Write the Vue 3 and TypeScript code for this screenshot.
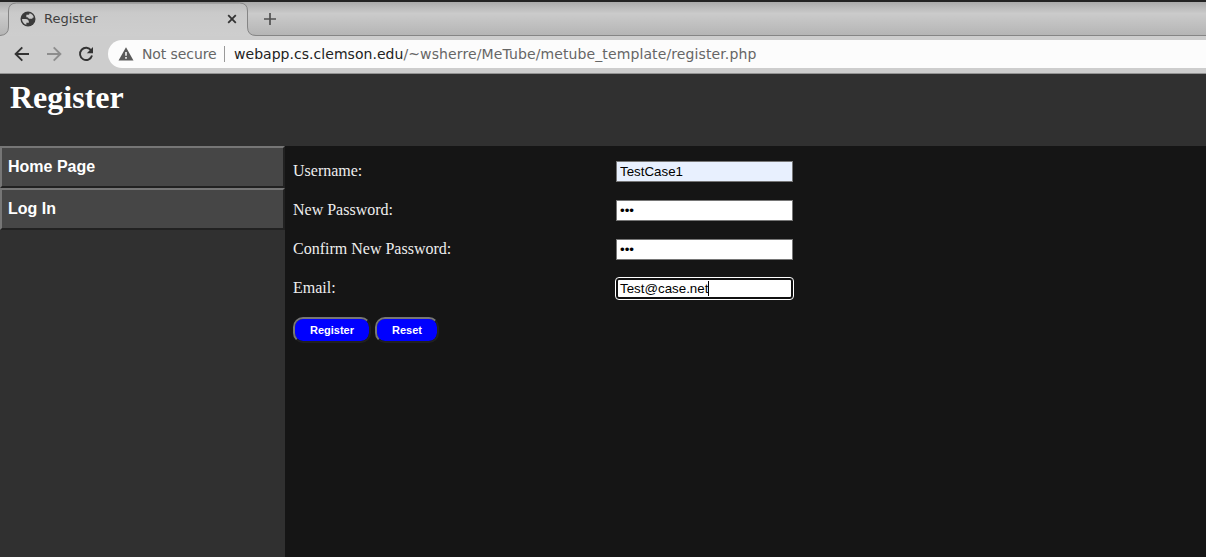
<script setup lang="ts">
import { ref } from 'vue'

interface Field {
  label: string
  type: string
  value: string
  state: string
}

const fields = ref<Field[]>([
  { label: 'Username:', type: 'text', value: 'TestCase1', state: 'autofilled' },
  { label: 'New Password:', type: 'password', value: 'abc', state: '' },
  { label: 'Confirm New Password:', type: 'password', value: 'abc', state: '' },
  { label: 'Email:', type: 'text', value: 'Test@case.net', state: 'focused' },
])
const links: string[] = ['Home Page', 'Log In']
</script>

<template>
  <div class="window">
    <div class="tabstrip">
      <svg class="tab-shape" width="258" height="34" viewBox="0 0 258 34">
        <defs>
          <linearGradient id="tabfill" x1="0" y1="0" x2="0" y2="1">
            <stop offset="0" stop-color="#bcbcbc" />
            <stop offset=".3" stop-color="#cacaca" />
            <stop offset="1" stop-color="#cecece" />
          </linearGradient>
        </defs>
        <path d="M0 33.5Q8.500 33 8.500 25V9Q8.500 1 16.500 1H239.500Q247.500 1 247.500 9V25Q247.500 33.500 256 33.500H258V34H0Z" fill="url(#tabfill)" />
        <path d="M0 33.500Q8.500 33 8.500 25V9Q8.500 1 16.500 1H239.500Q247.500 1 247.500 9V25Q247.500 33.500 256 33.500H258" fill="none" stroke="#858585" />
      </svg>
      <div class="tab">
        <svg class="globe" width="18" height="18" viewBox="0 0 24 24">
          <circle cx="12" cy="12" r="10" fill="#3b3b3b" />
          <path fill="#cacaca" d="M4 12h4.600c3.400 0 4.900 1.700 4.600 5.100H9.800v2.500C6.300 18.700 4 15.600 4 12z" />
          <path fill="#cacaca" d="M14 4.300c-.1 1.500-.8 2.200-2.100 2.100H9.800v3.200c2.300 0 3.100.8 3.300 2.100h3.500c1 0 1.700-.6 1.800-1.700h1.400c-.6-2.700-2.900-5-5.800-5.700z" />
        </svg>
        <span class="tab-title">Register</span>
        <svg class="close" width="10" height="10" viewBox="0 0 10 10"><path d="M1.200 1.200 8.800 8.800M8.800 1.200 1.200 8.800" stroke="#333" stroke-width="1.800" /></svg>
      </div>
      <svg class="plus" width="12" height="12" viewBox="0 0 12 12"><path d="M6 0V12M0 6H12" stroke="#505050" stroke-width="1.700" /></svg>
    </div>
    <div class="toolbar">
      <svg class="nav-icon" width="20" height="20" viewBox="0 0 20 20"><path d="M17 10H4M10.300 3.300 3.600 10l6.700 6.700" fill="none" stroke="#333" stroke-width="1.900" /></svg>
      <svg class="nav-icon" width="20" height="20" viewBox="0 0 20 20"><path d="M3 10H16M9.700 3.300 16.400 10l-6.700 6.700" fill="none" stroke="#8d8d8d" stroke-width="1.900" /></svg>
      <svg class="nav-icon" width="20" height="20" viewBox="0 0 20 20"><path d="M15.200 6.500A6.100 6.100 0 1 0 16 11.500" fill="none" stroke="#333" stroke-width="1.900" /><path d="M17 3v6.200h-6.200Z" fill="#333" /></svg>
      <div class="omnibox">
        <svg class="warning" width="16" height="14" viewBox="0 0 16 14"><path d="M8 .3 15.500 13.500H.5Z" fill="#5a5a5a" /><path d="M8 5v3.800M8 10v1.700" stroke="#fff" stroke-width="1.500" /></svg>
        <span class="security">Not secure</span>
        <span class="divider"></span>
        <span class="url"><span class="host">webapp.cs.clemson.edu</span>/~wsherre/MeTube/metube_template/register.php</span>
      </div>
    </div>
    <header><h1>Register</h1></header>
    <div class="body">
      <nav>
        <a v-for="link in links" :key="link">{{ link }}</a>
      </nav>
      <form @submit.prevent>
        <label v-for="field in fields" :key="field.label" class="row">
          <span class="label">{{ field.label }}</span>
          <span v-if="field.state === 'focused'" class="input focused">{{ field.value }}<i class="caret"></i></span>
          <input v-else v-model="field.value" class="input" :class="field.state" :type="field.type" />
        </label>
        <div class="actions">
          <button type="submit">Register</button>
          <button type="button" class="reset">Reset</button>
        </div>
      </form>
    </div>
  </div>
</template>

<style>
body {
  margin: 0;
  overflow: hidden;
}
</style>

<style scoped>
.window {
  width: 1206px;
  height: 557px;
  display: flex;
  flex-direction: column;
  overflow: hidden;
  background: #303030;
  font-family: "Liberation Serif", serif;
}
.tabstrip {
  position: relative;
  box-sizing: border-box;
  height: 36px;
  flex: none;
  display: flex;
  align-items: center;
  border-top: 2px solid #222;
  border-bottom: 1px solid #858585;
  background: linear-gradient(#aaa, #cbcbcb 35%, #b5b5b5);
  font-family: "DejaVu Sans", sans-serif;
}
.tab-shape {
  position: absolute;
  left: 0;
  top: 0;
}
.tab {
  position: relative;
  box-sizing: border-box;
  width: 248px;
  height: 33px;
  padding: 0 11px 0 19px;
  display: flex;
  align-items: center;
}
.tab-title {
  margin-left: 7px;
  flex: 1;
  font-size: 13px;
  color: #404040;
}
.plus {
  margin-left: 16px;
}
.toolbar {
  box-sizing: border-box;
  height: 38px;
  flex: none;
  display: flex;
  align-items: center;
  padding: 0 0 1px 12px;
  border-bottom: 1px solid #929292;
  background: #cdcdcd;
  font-family: "DejaVu Sans", sans-serif;
}
.nav-icon {
  margin-right: 12px;
}
.omnibox {
  flex: 1;
  height: 28px;
  display: flex;
  align-items: center;
  padding-left: 10px;
  border-radius: 14px 0 0 14px;
  background: #fcfcfc;
  font-size: 14px;
  color: #666;
  white-space: nowrap;
}
.security {
  width: 74px;
  margin-left: 8px;
  letter-spacing: -0.1px;
}
.divider {
  width: 1px;
  height: 16px;
  margin: 0 9px 0 8px;
  background: #999;
}
.url {
  letter-spacing: 0.11px;
}
.host {
  letter-spacing: 0.04px;
  color: #222;
}
header {
  height: 72px;
  flex: none;
  padding-left: 10px;
  background: #303030;
}
h1 {
  margin: 0;
  padding-top: 5px;
  font-size: 32px;
  line-height: 37px;
  color: #fff;
}
.body {
  flex: 1;
  display: flex;
}
nav {
  width: 285px;
  background: #303030;
}
nav a {
  box-sizing: border-box;
  display: block;
  height: 42px;
  padding-left: 6px;
  border: 2px solid;
  border-color: #767676 #212121 #212121 #767676;
  background: #464646;
  font: bold 16px/37px "Liberation Sans", sans-serif;
  color: #fff;
}
form {
  flex: 1;
  padding: 15px 8px 0;
  background: #151515;
}
.row {
  display: grid;
  grid-template-columns: 323px 177px;
  height: 39px;
  align-items: start;
  font-size: 16px;
  color: #eee;
}
.label {
  line-height: 20px;
}
.input {
  box-sizing: border-box;
  width: 177px;
  height: 21px;
  margin: 0;
  padding: 1px 3px;
  border: 1px solid #767676;
  border-radius: 0;
  background: #fff;
  font: 13.333px/17px "Liberation Sans", sans-serif;
  color: #000;
}
.autofilled {
  background: #e8f0fe;
}
.focused {
  padding: 0 2px;
  border: 2px solid #101010;
  border-radius: 3px;
  outline: 1px solid #fff;
}
.caret {
  display: inline-block;
  width: 1px;
  height: 15px;
  vertical-align: -3px;
  background: #000;
}
.actions {
  display: flex;
  gap: 4px;
}
button {
  box-sizing: border-box;
  width: 78px;
  height: 26px;
  padding: 0;
  border: 2px solid;
  border-color: #767676 #212121 #212121 #767676;
  border-radius: 10px;
  background: #00f;
  background-clip: padding-box;
  font: bold 11px "Liberation Sans", sans-serif;
  color: #fff;
}
.reset {
  width: 64px;
}
</style>
